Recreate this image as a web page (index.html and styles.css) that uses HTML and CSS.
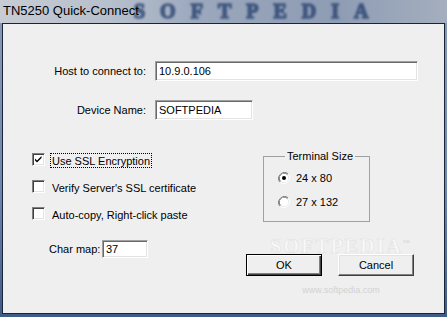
FILE: index.html
```html
<!DOCTYPE html>
<html>
<head>
<meta charset="utf-8">
<link rel="stylesheet" href="styles.css">
</head>
<body>
<div class="window">
  <div class="titlebar">
    <span class="wm-title">SOFTPEDIA</span>
    <span class="title">TN5250 Quick-Connect</span>
  </div>
  <div class="client">
    <div class="wm">
      <span class="wm-big">SOFTPEDIA<sup>™</sup></span>
      <span class="wm-small">www.softpedia.com</span>
    </div>
    <div class="field-row host">
      <span class="lbl">Host to connect to:</span>
      <div class="edit edit-host">10.9.0.106</div>
    </div>
    <div class="field-row device">
      <span class="lbl">Device Name:</span>
      <div class="edit edit-device">SOFTPEDIA</div>
    </div>
    <div class="lower">
      <div class="left-col">
        <div class="check-row">
          <span class="checkbox"><svg width="11" height="11" viewBox="0 0 11 11"><path d="M2 4.5 L4 6.5 L8.5 2 L8.5 4 L4 8.5 L2 6.5 Z" fill="#000"/></svg></span>
          <span class="check-label focus">Use SSL Encryption</span>
        </div>
        <div class="check-row">
          <span class="checkbox"></span>
          <span class="check-label">Verify Server's SSL certificate</span>
        </div>
        <div class="check-row">
          <span class="checkbox"></span>
          <span class="check-label">Auto-copy, Right-click paste</span>
        </div>
        <div class="char-row">
          <span class="char-lbl">Char map:</span>
          <div class="edit edit-char">37</div>
        </div>
      </div>
      <div class="right-col">
        <fieldset class="group">
          <legend>Terminal Size</legend>
          <div class="radio-row">
            <svg class="radio" width="12" height="12" viewBox="0 0 12 12">
              <path d="M10.2 1.8 A6 6 0 0 0 1.8 10.2" fill="none" stroke="#808080" stroke-width="1"/>
              <path d="M9.5 2.5 A5 5 0 0 0 2.5 9.5" fill="none" stroke="#404040" stroke-width="1"/>
              <path d="M1.8 10.2 A6 6 0 0 0 10.2 1.8" fill="none" stroke="#ffffff" stroke-width="1"/>
              <path d="M2.5 9.5 A5 5 0 0 0 9.5 2.5" fill="none" stroke="#e3e3e3" stroke-width="1"/>
              <circle cx="6" cy="6" r="4.4" fill="#fff"/>
              <circle cx="6" cy="6" r="2" fill="#000"/>
            </svg>
            <span>24 x 80</span>
          </div>
          <div class="radio-row">
            <svg class="radio" width="12" height="12" viewBox="0 0 12 12">
              <path d="M10.2 1.8 A6 6 0 0 0 1.8 10.2" fill="none" stroke="#808080" stroke-width="1"/>
              <path d="M9.5 2.5 A5 5 0 0 0 2.5 9.5" fill="none" stroke="#404040" stroke-width="1"/>
              <path d="M1.8 10.2 A6 6 0 0 0 10.2 1.8" fill="none" stroke="#ffffff" stroke-width="1"/>
              <path d="M2.5 9.5 A5 5 0 0 0 9.5 2.5" fill="none" stroke="#e3e3e3" stroke-width="1"/>
              <circle cx="6" cy="6" r="4.4" fill="#fff"/>
            </svg>
            <span>27 x 132</span>
          </div>
        </fieldset>
        <div class="buttons">
          <button class="btn default">OK</button>
          <button class="btn">Cancel</button>
        </div>
      </div>
    </div>
  </div>
</div>
</body>
</html>
```
FILE: styles.css
```css
html, body {
  margin: 0;
  padding: 0;
}
body {
  font-family: "Liberation Sans", Arial, sans-serif;
  font-size: 11px;
  color: #000;
}
.window {
  width: 447px;
  height: 317px;
  display: flex;
  flex-direction: column;
  background: linear-gradient(to bottom, #8a9ab4 0%, #6f87ad 60%, #3f5b86 100%);
  overflow: hidden;
}
.titlebar {
  position: relative;
  height: 23px;
  flex: none;
  background: linear-gradient(to right, #c7ccd4 0%, #b6bfcc 25%, #9aa7bc 45%, #8e9cb4 75%, #a4aebe 100%);
  overflow: hidden;
}
.title {
  position: relative;
  display: block;
  padding: 3px 0 0 3px;
  font-size: 13px;
  line-height: 15px;
  color: #000;
}
.wm-title {
  position: absolute;
  left: 134px;
  top: 0;
  font-family: "Liberation Serif", serif;
  font-weight: bold;
  font-size: 20px;
  line-height: 23px;
  letter-spacing: 15px;
  color: #2c4572;
  opacity: 0.8;
  -webkit-text-stroke: 1.5px #2c4572;
  filter: blur(0.8px);
}
.client {
  position: relative;
  flex: 1;
  margin: 0 2px 3px 2px;
  border: 1px solid #1b2436;
  background: #efefef;
  padding-top: 37px;
}
.field-row {
  display: flex;
  align-items: center;
  gap: 9px;
}
.field-row.device {
  margin-top: 19px;
}
.lbl {
  width: 143px;
  text-align: right;
}
.edit {
  box-sizing: border-box;
  background: #fff;
  border-top: 1px solid #a0a0a0;
  border-left: 1px solid #a0a0a0;
  border-bottom: 1px solid #fff;
  border-right: 1px solid #fff;
  box-shadow: inset 1px 1px 0 #696969, inset -1px -1px 0 #e3e3e3;
  padding: 0 3px;
  display: flex;
  align-items: center;
  font-size: 11px;
}
.edit-host {
  width: 263px;
  height: 20px;
}
.edit-device {
  width: 98px;
  height: 20px;
}
.lower {
  display: flex;
  margin-top: 33px;
}
.left-col {
  width: 214px;
  padding-left: 29px;
  display: flex;
  flex-direction: column;
}
.check-row {
  display: flex;
  align-items: flex-start;
  height: 13px;
  margin-bottom: 14px;
}
.checkbox {
  box-sizing: border-box;
  width: 13px;
  height: 13px;
  background: #fff;
  border-top: 1px solid #808080;
  border-left: 1px solid #808080;
  border-bottom: 1px solid #fff;
  border-right: 1px solid #fff;
  box-shadow: inset 1px 1px 0 #404040, inset -1px -1px 0 #e3e3e3;
  display: flex;
  align-items: center;
  justify-content: center;
  flex: none;
}
.check-label {
  margin-left: 5px;
  height: 15px;
  line-height: 15px;
  padding: 0 1px;
  border: 1px solid transparent;
  box-sizing: border-box;
  white-space: nowrap;
}
.check-label.focus {
  border: 1px dotted #000;
}
.char-row {
  display: flex;
  align-items: center;
  margin-top: 6px;
  padding-left: 17px;
}
.char-lbl {
  width: 53px;
}
.edit-char {
  width: 46px;
  height: 18px;
}
.right-col {
  display: flex;
  flex-direction: column;
}
.group {
  margin: -3px 0 0 17px;
  width: 107px;
  box-sizing: border-box;
  border: 1px solid #a0a0a0;
  padding: 9px 0 13px 14px;
  min-width: 0;
}
.group legend {
  padding: 0 2px;
  margin-left: 7px;
  line-height: 13px;
}
.radio-row {
  display: flex;
  align-items: center;
  height: 12px;
  gap: 6px;
}
.radio-row + .radio-row {
  margin-top: 12px;
}
.radio {
  flex: none;
  display: block;
}
.buttons {
  display: flex;
  gap: 16px;
  margin-top: 32px;
}
.btn {
  box-sizing: border-box;
  width: 76px;
  height: 22px;
  background: #efefef;
  font-family: "Liberation Sans", Arial, sans-serif;
  font-size: 11px;
  color: #000;
  border: 1px solid;
  border-color: #fff #404040 #404040 #fff;
  box-shadow: inset -1px -1px 0 #808080, inset 1px 1px 0 #e3e3e3;
  padding: 0;
  margin: 0;
}
.btn.default {
  border: 1px solid #000;
  box-shadow: inset 1px 1px 0 #fff, inset -1px -1px 0 #404040, inset -2px -2px 0 #808080;
}
.wm {
  position: absolute;
  left: 268px;
  top: 214px;
  width: 140px;
  pointer-events: none;
  display: flex;
  flex-direction: column;
  align-items: center;
}
.wm-big {
  font-family: "Liberation Serif", serif;
  font-weight: bold;
  font-size: 20px;
  line-height: 16px;
  letter-spacing: 2px;
  color: #f8f8f8;
  -webkit-text-stroke: 0.5px #e0e0e0;
}
.wm-big sup {
  font-size: 7px;
  line-height: 0;
  color: #d8d8d8;
  -webkit-text-stroke: 0;
}
.wm-small {
  margin-top: 31px;
  font-size: 9px;
  line-height: 10px;
  color: #d2d2d2;
}
```
